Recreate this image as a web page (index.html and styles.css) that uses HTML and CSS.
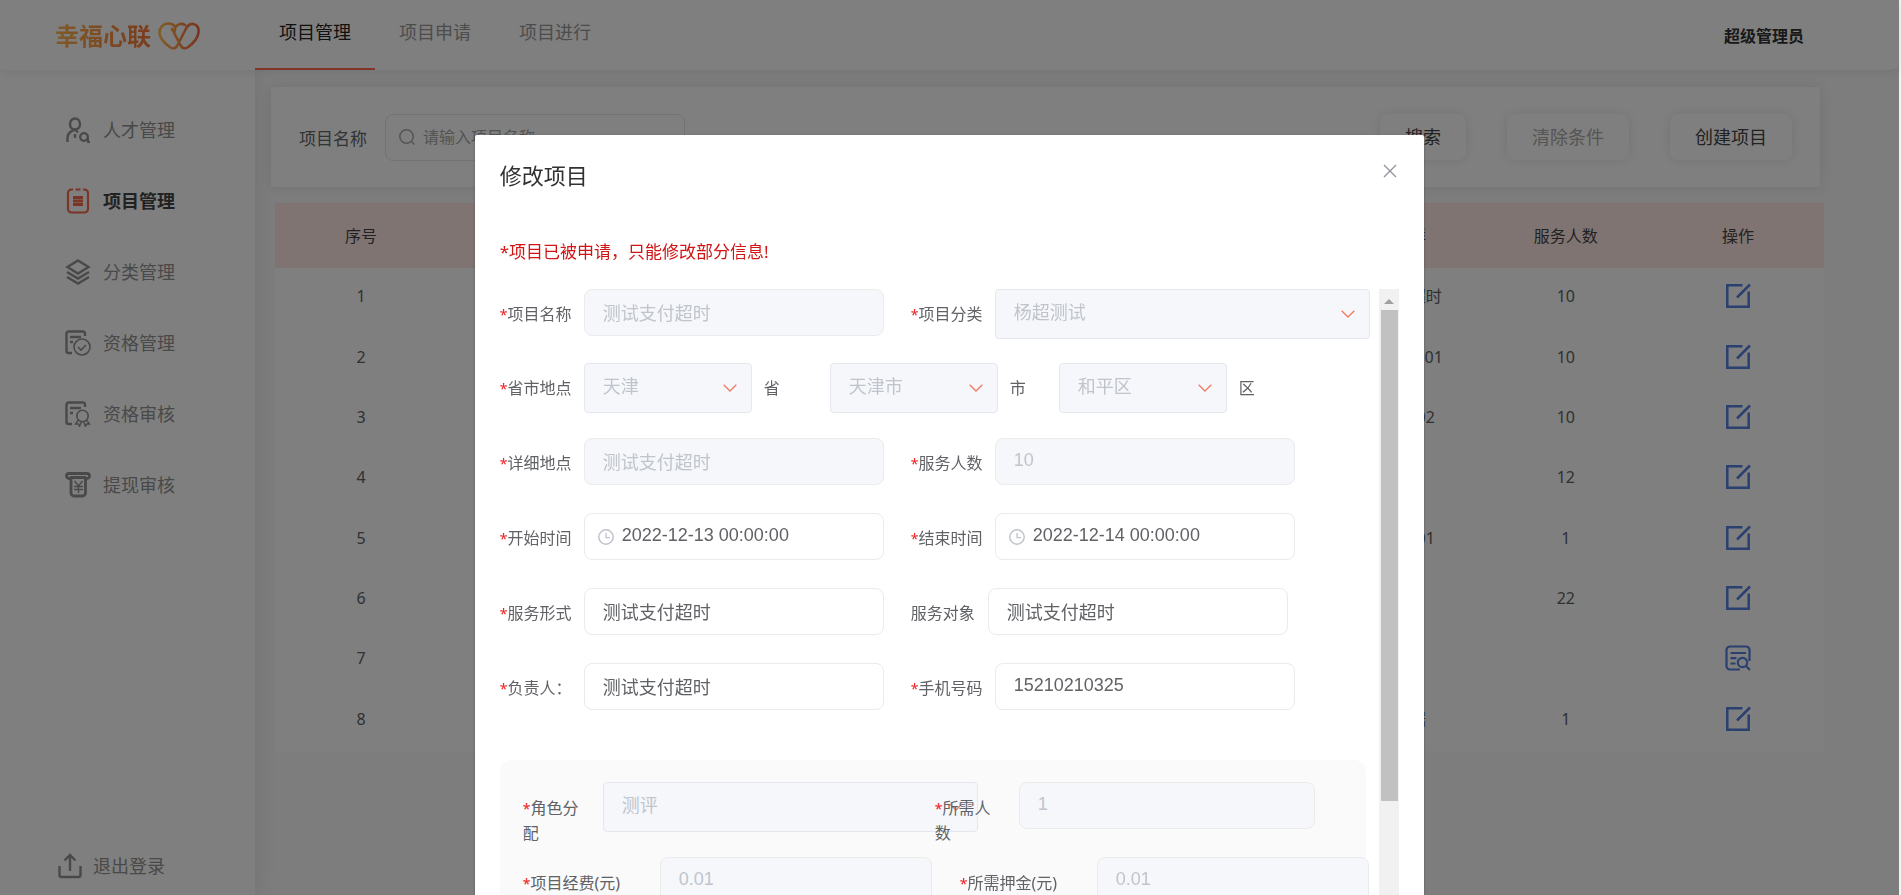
FILE: index.html
```html
<!DOCTYPE html>
<html lang="zh-CN">
<head>
<meta charset="utf-8">
<title>项目管理</title>
<link rel="stylesheet" href="styles.css">
</head>
<body>
<svg class="defs" aria-hidden="true">
  <symbol id="edit" viewBox="0 0 26 26"><path d="M17.500 2.300H2.300v21.400h21.400V8.500M25 1.500 12 14.500" fill="none" stroke="currentColor" stroke-width="2.500"/></symbol>
  <symbol id="view" viewBox="0 0 26 26"><path d="M15 24.500H5a3.500 3.500 0 0 1-3.500-3.500V5A3.500 3.500 0 0 1 5 1.500h16A3.500 3.500 0 0 1 24.500 5v11M5.500 8h15.500M5.500 13.200h6M5.500 18.500h5M21 21l4 4" fill="none" stroke="currentColor" stroke-width="2.200"/><circle cx="17.500" cy="17.500" r="4.700" fill="none" stroke="currentColor" stroke-width="2.200"/></symbol>
  <symbol id="chevron" viewBox="0 0 14 8"><path d="M.7.700 7 7l6.300-6.300" fill="none" stroke="currentColor" stroke-width="1.300"/></symbol>
  <symbol id="clock" viewBox="0 0 16 16"><path d="M8 4v4.700h4" fill="none" stroke="currentColor" stroke-width="1.300"/><circle cx="8" cy="8" r="7.200" fill="none" stroke="currentColor" stroke-width="1.500"/></symbol>
</svg>

<div class="app">
  <header class="header">
    <div class="logo">
      <span class="logo-text">幸福心联</span>
      <svg class="logo-mark" viewBox="0 0 42 28"><defs><linearGradient id="warm"><stop offset="0" stop-color="#ffb84e"/><stop offset="1" stop-color="#f5693c"/></linearGradient></defs><path d="M16.500 9.500C18.500 4 15 1.500 10.500 1.500 5 1.500 1.500 5.500 1.500 10.500c0 6.500 6 11.500 11 15 2.500 1.500 5 1 6.500-1.500L27 8.500c2-4.500 5.500-7 8.500-6.500 4 .5 5.500 4.500 5 8.500-.8 6.500-6 11.500-11 15-2.500 1.500-5 1-6.500-1.500L14 7M18 4.500C20 2 24 1 27 3" fill="none" stroke="url(#warm)" stroke-width="2.600" stroke-linecap="round"/></svg>
    </div>
    <nav class="tabs">
      <a class="tab tab-active" href="#manage">项目管理</a>
      <a class="tab" href="#apply">项目申请</a>
      <a class="tab" href="#progress">项目进行</a>
    </nav>
    <span class="user">超级管理员</span>
  </header>

  <div class="body">
    <aside class="sidebar">
      <nav class="menu">
        <a class="menu-item" href="#talent"><svg class="menu-icon" viewBox="0 0 24 26"><path d="M4 7a5 5.500 0 1 1 10 0c0 3-2 5.500-5 5.500S4 10 4 7zM1.500 25v-4c0-4 3-7 7.500-8.500M9 12.500l3 3M9 17v4" fill="none" stroke="currentColor" stroke-width="2.400"/><circle cx="18" cy="20" r="3.800" fill="none" stroke="currentColor" stroke-width="2.300"/><path d="M22 20v5h2" fill="none" stroke="currentColor" stroke-width="2"/></svg>人才管理</a>
        <a class="menu-item menu-active" href="#project"><svg class="menu-icon" viewBox="0 0 24 26"><path d="M7 1.500H5.500A3.500 3.500 0 0 0 2 5v16a3.500 3.500 0 0 0 3.500 3.500h13A3.500 3.500 0 0 0 22 21V5a3.500 3.500 0 0 0-3.500-3.500H17M9.500 1.500h5" fill="none" stroke="currentColor" stroke-width="2.200"/><path d="M7 9.500h10M7 13h10M7 16.500h10" stroke="currentColor" stroke-width="2.800"/></svg>项目管理</a>
        <a class="menu-item" href="#category"><svg class="menu-icon" viewBox="0 0 24 26"><path d="M12 1.500 22.500 8 12 14.500 1.500 8zM1 13l11 6.500L23 13M1 18l11 6.500L23 18" fill="none" stroke="currentColor" stroke-width="2.400"/></svg>分类管理</a>
        <a class="menu-item" href="#qualification"><svg class="menu-icon" viewBox="0 0 26 26"><path d="M20 6V3.500a2 2 0 0 0-2-2H3.500a2 2 0 0 0-2 2V21a2 2 0 0 0 2 2H7M5 7h11M5 12h3" fill="none" stroke="currentColor" stroke-width="2.400"/><circle cx="17" cy="17" r="8" fill="none" stroke="currentColor" stroke-width="1.600"/><path d="m13 17 3 3 5-5" fill="none" stroke="currentColor" stroke-width="1.600"/></svg>资格管理</a>
        <a class="menu-item" href="#review"><svg class="menu-icon" viewBox="0 0 26 26"><path d="M20 6V3.500a2 2 0 0 0-2-2H3.500a2 2 0 0 0-2 2V21a2 2 0 0 0 2 2H7M5 7h11M5 12h3" fill="none" stroke="currentColor" stroke-width="2.400"/><circle cx="17.500" cy="15" r="5.700" fill="none" stroke="currentColor" stroke-width="1.600"/><path d="m13.500 19-3 4h3l1 2.500 2-5M21.500 19l3 4h-3l-1 2.500-2-5" fill="none" stroke="currentColor" stroke-width="1.400"/></svg>资格审核</a>
        <a class="menu-item" href="#withdraw"><svg class="menu-icon" viewBox="0 0 26 26"><path d="M6 6.500H4a2.500 2.500 0 0 1 0-5h18a2.500 2.500 0 0 1 0 5h-2M5 5.500h16M6 6v15a3 3 0 0 0 3 3h8.500a3 3 0 0 0 3-3V6" fill="none" stroke="currentColor" stroke-width="2.800"/><path d="m9.500 9 4 5 4-5M13.500 14v7M9 14.500h9M9 17.500h9" fill="none" stroke="currentColor" stroke-width="1.400"/></svg>提现审核</a>
      </nav>
      <a class="menu-item logout" href="#logout"><svg class="menu-icon" viewBox="0 0 24 26"><path d="M1.500 13v9a2 2 0 0 0 2 2h17a2 2 0 0 0 2-2v-9M12 18V2M6.500 7.500 12 2l5.500 5.500" fill="none" stroke="currentColor" stroke-width="2.400"/></svg>退出登录</a>
    </aside>

    <main class="main">
      <section class="filter">
        <label class="filter-label" for="keyword">项目名称</label>
        <div class="search-box">
          <svg class="search-icon" viewBox="0 0 16 16"><circle cx="7.500" cy="7.500" r="6.700" fill="none" stroke="currentColor" stroke-width="1.500"/><path d="m12.500 12.500 3 3" stroke="currentColor" stroke-width="1.500"/></svg>
          <input class="search-input" id="keyword" type="text" placeholder="请输入项目名称">
        </div>
        <div class="filter-actions">
          <button class="button" type="button">搜索</button>
          <button class="button button-muted" type="button">清除条件</button>
          <button class="button" type="button">创建项目</button>
        </div>
      </section>

      <table class="table">
        <thead><tr><th>序号</th><th></th><th></th><th></th><th></th><th></th><th>服务人群</th><th>服务人数</th><th>操作</th></tr></thead>
        <tbody>
          <tr><td>1</td><td></td><td></td><td></td><td></td><td></td><td>测试支付超时</td><td>10</td><td><button class="row-action" aria-label="编辑"><svg><use href="#edit"/></svg></button></td></tr>
          <tr><td>2</td><td></td><td></td><td></td><td></td><td></td><td>测试服务群01</td><td>10</td><td><button class="row-action" aria-label="编辑"><svg><use href="#edit"/></svg></button></td></tr>
          <tr><td>3</td><td></td><td></td><td></td><td></td><td></td><td>测试服务02</td><td>10</td><td><button class="row-action" aria-label="编辑"><svg><use href="#edit"/></svg></button></td></tr>
          <tr><td>4</td><td></td><td></td><td></td><td></td><td></td><td></td><td>12</td><td><button class="row-action" aria-label="编辑"><svg><use href="#edit"/></svg></button></td></tr>
          <tr><td>5</td><td></td><td></td><td></td><td></td><td></td><td>测试服务01</td><td>1</td><td><button class="row-action" aria-label="编辑"><svg><use href="#edit"/></svg></button></td></tr>
          <tr><td>6</td><td></td><td></td><td></td><td></td><td></td><td></td><td>22</td><td><button class="row-action" aria-label="编辑"><svg><use href="#edit"/></svg></button></td></tr>
          <tr><td>7</td><td></td><td></td><td></td><td></td><td></td><td></td><td></td><td><button class="row-action" aria-label="查看"><svg><use href="#view"/></svg></button></td></tr>
          <tr><td>8</td><td></td><td></td><td></td><td></td><td></td><td>测试数据</td><td>1</td><td><button class="row-action" aria-label="编辑"><svg><use href="#edit"/></svg></button></td></tr>
        </tbody>
      </table>
    </main>
  </div>
</div>

<div class="overlay">
  <div class="dialog" role="dialog" aria-modal="true" aria-labelledby="dialog-title">
    <div class="dialog-head">
      <h2 class="dialog-title" id="dialog-title">修改项目</h2>
      <button class="close" type="button" aria-label="关闭"><svg class="close-icon" viewBox="0 0 14 14"><path d="m1 1 12 12M13 1 1 13" stroke="currentColor" stroke-width="1.300"/></svg></button>
    </div>
    <p class="warning">*项目已被申请，只能修改部分信息!</p>
    <div class="scroll-area">
      <form class="form">
        <div class="form-row form-row-first">
          <div class="field"><label class="label" for="name"><i class="star">*</i>项目名称</label><input class="input" id="name" value="测试支付超时" disabled></div>
          <div class="field"><label class="label" for="category"><i class="star">*</i>项目分类</label><div class="select-wrap select-wide"><select class="select" id="category" disabled><option>杨超测试</option></select><svg class="chevron"><use href="#chevron"/></svg></div></div>
        </div>
        <div class="form-row form-row-tight">
          <label class="label" for="province"><i class="star">*</i>省市地点</label>
          <div class="select-wrap"><select class="select" id="province" disabled><option>天津</option></select><svg class="chevron"><use href="#chevron"/></svg></div>
          <label class="unit unit-wide" for="province">省</label>
          <div class="select-wrap"><select class="select" id="city" disabled><option>天津市</option></select><svg class="chevron"><use href="#chevron"/></svg></div>
          <label class="unit" for="city">市</label>
          <div class="select-wrap"><select class="select" id="district" disabled><option>和平区</option></select><svg class="chevron"><use href="#chevron"/></svg></div>
          <label class="unit" for="district">区</label>
        </div>
        <div class="form-row">
          <div class="field"><label class="label" for="address"><i class="star">*</i>详细地点</label><input class="input" id="address" value="测试支付超时" disabled></div>
          <div class="field"><label class="label" for="people"><i class="star">*</i>服务人数</label><input class="input" id="people" value="10" disabled></div>
        </div>
        <div class="form-row">
          <div class="field"><label class="label" for="start"><i class="star">*</i>开始时间</label><div class="date-wrap"><svg class="clock"><use href="#clock"/></svg><input class="input input-date" id="start" value="2022-12-13 00:00:00"></div></div>
          <div class="field"><label class="label" for="end"><i class="star">*</i>结束时间</label><div class="date-wrap"><svg class="clock"><use href="#clock"/></svg><input class="input input-date" id="end" value="2022-12-14 00:00:00"></div></div>
        </div>
        <div class="form-row">
          <div class="field"><label class="label" for="mode"><i class="star">*</i>服务形式</label><input class="input" id="mode" value="测试支付超时"></div>
          <div class="field"><label class="label label-plain" for="target">服务对象</label><input class="input" id="target" value="测试支付超时"></div>
        </div>
        <div class="form-row">
          <div class="field"><label class="label" for="owner"><i class="star">*</i>负责人：</label><input class="input" id="owner" value="测试支付超时"></div>
          <div class="field"><label class="label" for="phone"><i class="star">*</i>手机号码</label><input class="input" id="phone" value="15210210325"></div>
        </div>

        <div class="panel">
          <div class="panel-row">
            <div class="panel-field role-field"><label class="panel-label" for="role"><i class="star">*</i>角色分配</label><div class="select-wrap select-role"><select class="select" id="role" disabled><option>测评</option></select><svg class="chevron"><use href="#chevron"/></svg></div></div>
            <div class="panel-field"><label class="panel-label panel-label-need" for="need"><i class="star">*</i>所需人数</label><input class="input input-need" id="need" value="1" disabled></div>
          </div>
          <div class="panel-row">
            <div class="panel-field fee-field"><label class="panel-label panel-label-wide" for="fee"><i class="star">*</i>项目经费(元)</label><input class="input input-fee" id="fee" value="0.01" disabled></div>
            <div class="panel-field"><label class="panel-label panel-label-wide" for="deposit"><i class="star">*</i>所需押金(元)</label><input class="input input-fee" id="deposit" value="0.01" disabled></div>
          </div>
        </div>
      </form>
      <div class="scrollbar" aria-hidden="true"><div class="scroll-arrow"></div><div class="scroll-thumb"></div></div>
    </div>
  </div>
</div>
</body>
</html>
```
FILE: styles.css
```css
* {
  box-sizing: border-box;
}

body {
  margin: 0;
  height: 100vh;
  overflow: hidden;
  background: #f3f3f3;
  color: #606266;
  font: 16px/24px "Noto Sans", "Noto Sans CJK SC", sans-serif;
}

a {
  color: inherit;
  text-decoration: none;
}

button,
input,
select {
  font: inherit;
  color: inherit;
}

.defs {
  display: none;
}

.app {
  display: flex;
  flex-direction: column;
  height: 100vh;
  margin-right: 2px;
  background: #fafafa;
}

/* Header */
.header {
  display: flex;
  flex: none;
  position: relative;
  z-index: 2;
  height: 70px;
  padding-right: 95px;
  background: #fff;
  border-radius: 0 0 14px 0 / 0 0 4px 0;
  box-shadow: 0 2px 10px rgba(0, 0, 0, 0.08);
}

.logo {
  display: flex;
  align-items: center;
  gap: 7px;
  width: 255px;
  padding: 2px 0 0 55px;
}

.logo-text {
  background: linear-gradient(90deg, #ffb450, #f5783c);
  background-clip: text;
  color: transparent;
  font-size: 24px;
  font-weight: 700;
  line-height: 32px;
}

.logo-mark {
  width: 42px;
  height: 28px;
}

.tabs {
  display: flex;
}

.tab {
  width: 120px;
  border-bottom: 2px solid transparent;
  color: #999;
  font-size: 18px;
  line-height: 64px;
  text-align: center;
}

.tab-active {
  border-color: #ff6b4f;
  color: #222;
}

.user {
  margin-left: auto;
  color: #333;
  font-weight: 700;
  line-height: 72px;
}

/* Sidebar */
.body {
  display: flex;
  flex: 1;
  min-height: 0;
}

.sidebar {
  display: flex;
  flex-direction: column;
  flex: none;
  width: 255px;
  padding: 44px 0 13px;
  background: #fff;
  box-shadow: 0 0 20px rgba(0, 0, 0, 0.1);
}

.menu {
  display: flex;
  flex-direction: column;
  gap: 39px;
  padding-left: 65px;
}

.menu-item {
  display: flex;
  align-items: center;
  gap: 12px;
  color: #929292;
  font-size: 18px;
  line-height: 32px;
}

.menu-icon {
  flex: none;
  width: 26px;
  height: 26px;
}

.menu-active {
  color: #444;
  font-weight: 700;
}

.menu-active .menu-icon {
  color: #f8694e;
}

.logout {
  gap: 10px;
  margin-top: auto;
  padding-left: 57px;
}

/* Main */
.main {
  flex: 1;
  padding: 17px 75px 0 16px;
}

.filter {
  display: flex;
  align-items: center;
  height: 100px;
  margin-right: 4px;
  padding: 0 28px;
  background: #fff;
  box-shadow: 0 0 12px rgba(0, 0, 0, 0.1);
}

.filter-label {
  padding-top: 4px;
  color: #666;
  font-size: 17px;
  line-height: 24px;
}

.search-box {
  display: flex;
  align-items: center;
  gap: 8px;
  width: 300px;
  height: 47px;
  margin-left: 18px;
  padding-left: 13px;
  border: 1px solid #e6e6e6;
  border-radius: 8px;
  color: #a8a8a8;
}

.search-icon {
  flex: none;
  width: 16px;
  height: 16px;
}

.search-input {
  flex: 1;
  min-width: 0;
  padding: 0;
  border: 0;
  outline: 0;
  background: none;
}

.search-input::placeholder {
  color: #a8a8a8;
}

.filter-actions {
  display: flex;
  gap: 41px;
  margin-left: auto;
}

.button {
  height: 46px;
  padding: 0 25px;
  border: 0;
  border-radius: 8px;
  background: #fff;
  box-shadow: 0 0 12px rgba(0, 0, 0, 0.1);
  color: #444;
  font-size: 18px;
}

.button-muted {
  color: #aaa;
}

.table {
  width: calc(100% - 4px);
  height: 548px;
  margin: 16px 0 0 4px;
  border-collapse: collapse;
  table-layout: fixed;
  background: #fff;
  text-align: center;
}

.table th {
  height: 65px;
  padding: 0;
  background: #ffe8e3;
  color: #444;
  font-weight: 400;
}

.table td {
  padding: 0 0 4px;
}

.row-action {
  display: block;
  width: 26px;
  height: 26px;
  margin: 0 auto;
  padding: 0;
  border: 0;
  background: none;
  color: #5580e0;
}

.row-action svg {
  display: block;
  width: 26px;
  height: 26px;
}

/* Dialog */
.overlay {
  position: fixed;
  z-index: 10;
  inset: 0 2px 0 0;
  overflow: hidden;
  background: rgba(0, 0, 0, 0.5);
}

.dialog {
  display: flex;
  flex-direction: column;
  width: 50%;
  height: 100%;
  margin: 135px auto 0;
  padding: 0 25px;
  border-radius: 2px;
  background: #fff;
  box-shadow: 0 1px 3px rgba(0, 0, 0, 0.3);
}

.dialog-head {
  display: flex;
  justify-content: space-between;
  padding-top: 24px;
}

.dialog-title {
  margin: 0;
  color: #303133;
  font-size: 22px;
  font-weight: 400;
  line-height: 32px;
}

.close {
  width: 18px;
  height: 18px;
  margin-top: 3px;
  padding: 2px;
  border: 0;
  background: none;
  color: #909399;
}

.close-icon {
  display: block;
  width: 14px;
  height: 14px;
}

.warning {
  margin: 49px 0 25px;
  color: #d21414;
  font-size: 17px;
  line-height: 24px;
}

.scroll-area {
  display: flex;
  flex: none;
  height: 800px;
}

.form {
  display: flex;
  flex-direction: column;
  flex: 1;
  gap: 25px;
  min-width: 0;
}

.form-row {
  display: flex;
  gap: 27px;
  height: 50px;
}

.form-row-first {
  height: 49px;
}

.form-row-tight {
  gap: 0;
}

.field,
.panel-field {
  display: flex;
  flex: none;
}

.label {
  flex: none;
  width: 84px;
  line-height: 50px;
}

.label-plain {
  width: 77px;
}

.star {
  color: #f02020;
  font-size: 14px;
  font-style: normal;
}

.input,
.select {
  width: 300px;
  height: 47px;
  padding: 0 18px 2px;
  border: 1px solid #ebebeb;
  border-radius: 8px;
  outline: 0;
  background: #fff;
  font-family: "Liberation Sans", "Noto Sans CJK SC", sans-serif;
  font-size: 18px;
}

.select {
  width: 100%;
  height: 50px;
  border-color: #e4e7ed;
  border-radius: 4px;
  appearance: none;
}

.input:disabled,
.select:disabled {
  background: #f5f7fb;
  color: #c0c4cc;
  opacity: 1;
}

.select-wrap,
.date-wrap {
  display: grid;
  flex: none;
  width: 168px;
  align-items: center;
}

.select-wrap > *,
.date-wrap > * {
  grid-area: 1 / 1;
}

.select-wide,
.select-role {
  width: 375px;
}

.chevron {
  justify-self: end;
  width: 14px;
  height: 8px;
  margin-right: 15px;
  color: #f07a60;
  pointer-events: none;
}

.date-wrap {
  width: 300px;
  align-self: start;
}

.clock {
  z-index: 1;
  width: 16px;
  height: 16px;
  margin-left: 14px;
  color: #c0c4cc;
}

.input-date {
  padding-left: 37px;
}

.unit {
  flex: none;
  width: 61px;
  padding-left: 12px;
  line-height: 50px;
}

.unit-wide {
  width: 78px;
}

/* Role panel */
.panel {
  width: 866px;
  margin-top: 22px;
  padding: 22px 0 25px 23px;
  border-radius: 12px;
  background: #fafafa;
}

.panel-row {
  display: flex;
  height: 75px;
}

.role-field {
  width: 412px;
}

.fee-field {
  width: 437px;
}

.panel-label {
  flex: none;
  width: 57px;
  margin-right: 23px;
  padding-top: 14px;
}

.panel-label-need {
  margin-right: 27px;
}

.panel-row .input-need {
  width: 296px;
}

.panel-label-wide {
  width: 114px;
}

.panel-row .input-fee {
  width: 272px;
}

.select-role {
  align-self: start;
}

/* Scrollbar */
.scrollbar {
  display: flex;
  flex-direction: column;
  align-items: center;
  flex: none;
  width: 20px;
  background: #f1f1f1;
}

.scroll-arrow {
  height: 21px;
  padding-top: 10px;
}

.scroll-arrow::before {
  content: "";
  display: block;
  border: 5px solid transparent;
  border-top: 0;
  border-bottom: 5px solid #a0a0a0;
}

.scroll-thumb {
  width: 17px;
  height: 491px;
  background: #c1c1c1;
}
```
